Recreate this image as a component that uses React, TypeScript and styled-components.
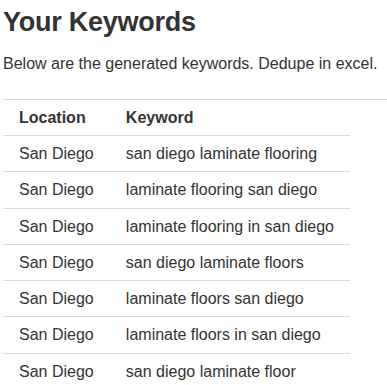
import React from "react";
import styled, { createGlobalStyle } from "styled-components";

const GlobalStyle = createGlobalStyle`
  html, body {
    margin: 0;
    padding: 0;
    background: #ffffff;
  }
  body {
    font-family: "Liberation Sans", Arial, Helvetica, sans-serif;
    color: #333333;
    -webkit-font-smoothing: antialiased;
  }
`;

const Page = styled.div`
  padding: 0 0 0 3px;
`;

const Title = styled.h2`
  margin: 8px 0 0;
  font-size: 27px;
  font-weight: 700;
  line-height: 1.1;
  letter-spacing: -0.25px;
  color: #333333;
`;

const Lead = styled.p`
  margin: 15px 0 0;
  font-size: 16px;
  line-height: 22px;
`;

const TableWrap = styled.div`
  margin-top: 24px;
  border-top: 1px solid #dddddd;
`;

const Table = styled.table`
  width: 347px;
  border-collapse: collapse;
  border-spacing: 0;
  font-size: 16px;
`;

const HeadCell = styled.th<{ $w?: number }>`
  width: ${(p) => (p.$w ? `${p.$w}px` : "auto")};
  padding: 7px 16px;
  line-height: 21.3px;
  text-align: left;
  font-weight: 700;
  border-bottom: 1px solid #dddddd;
  white-space: nowrap;
`;

const Cell = styled.td`
  padding: 7px 16px;
  line-height: 21.3px;
  border-bottom: 1px solid #dddddd;
  white-space: nowrap;
`;

const rows: [string, string][] = [
  ["San Diego", "san diego laminate flooring"],
  ["San Diego", "laminate flooring san diego"],
  ["San Diego", "laminate flooring in san diego"],
  ["San Diego", "san diego laminate floors"],
  ["San Diego", "laminate floors san diego"],
  ["San Diego", "laminate floors in san diego"],
  ["San Diego", "san diego laminate floor"],
];

export default function App() {
  return (
    <>
      <GlobalStyle />
      <Page>
        <Title>Your Keywords</Title>
        <Lead>Below are the generated keywords. Dedupe in excel.</Lead>
        <TableWrap>
          <Table>
            <thead>
              <tr>
                <HeadCell $w={106}>Location</HeadCell>
                <HeadCell>Keyword</HeadCell>
              </tr>
            </thead>
            <tbody>
              {rows.map(([loc, kw], i) => (
                <tr key={i}>
                  <Cell>{loc}</Cell>
                  <Cell>{kw}</Cell>
                </tr>
              ))}
            </tbody>
          </Table>
        </TableWrap>
      </Page>
    </>
  );
}
